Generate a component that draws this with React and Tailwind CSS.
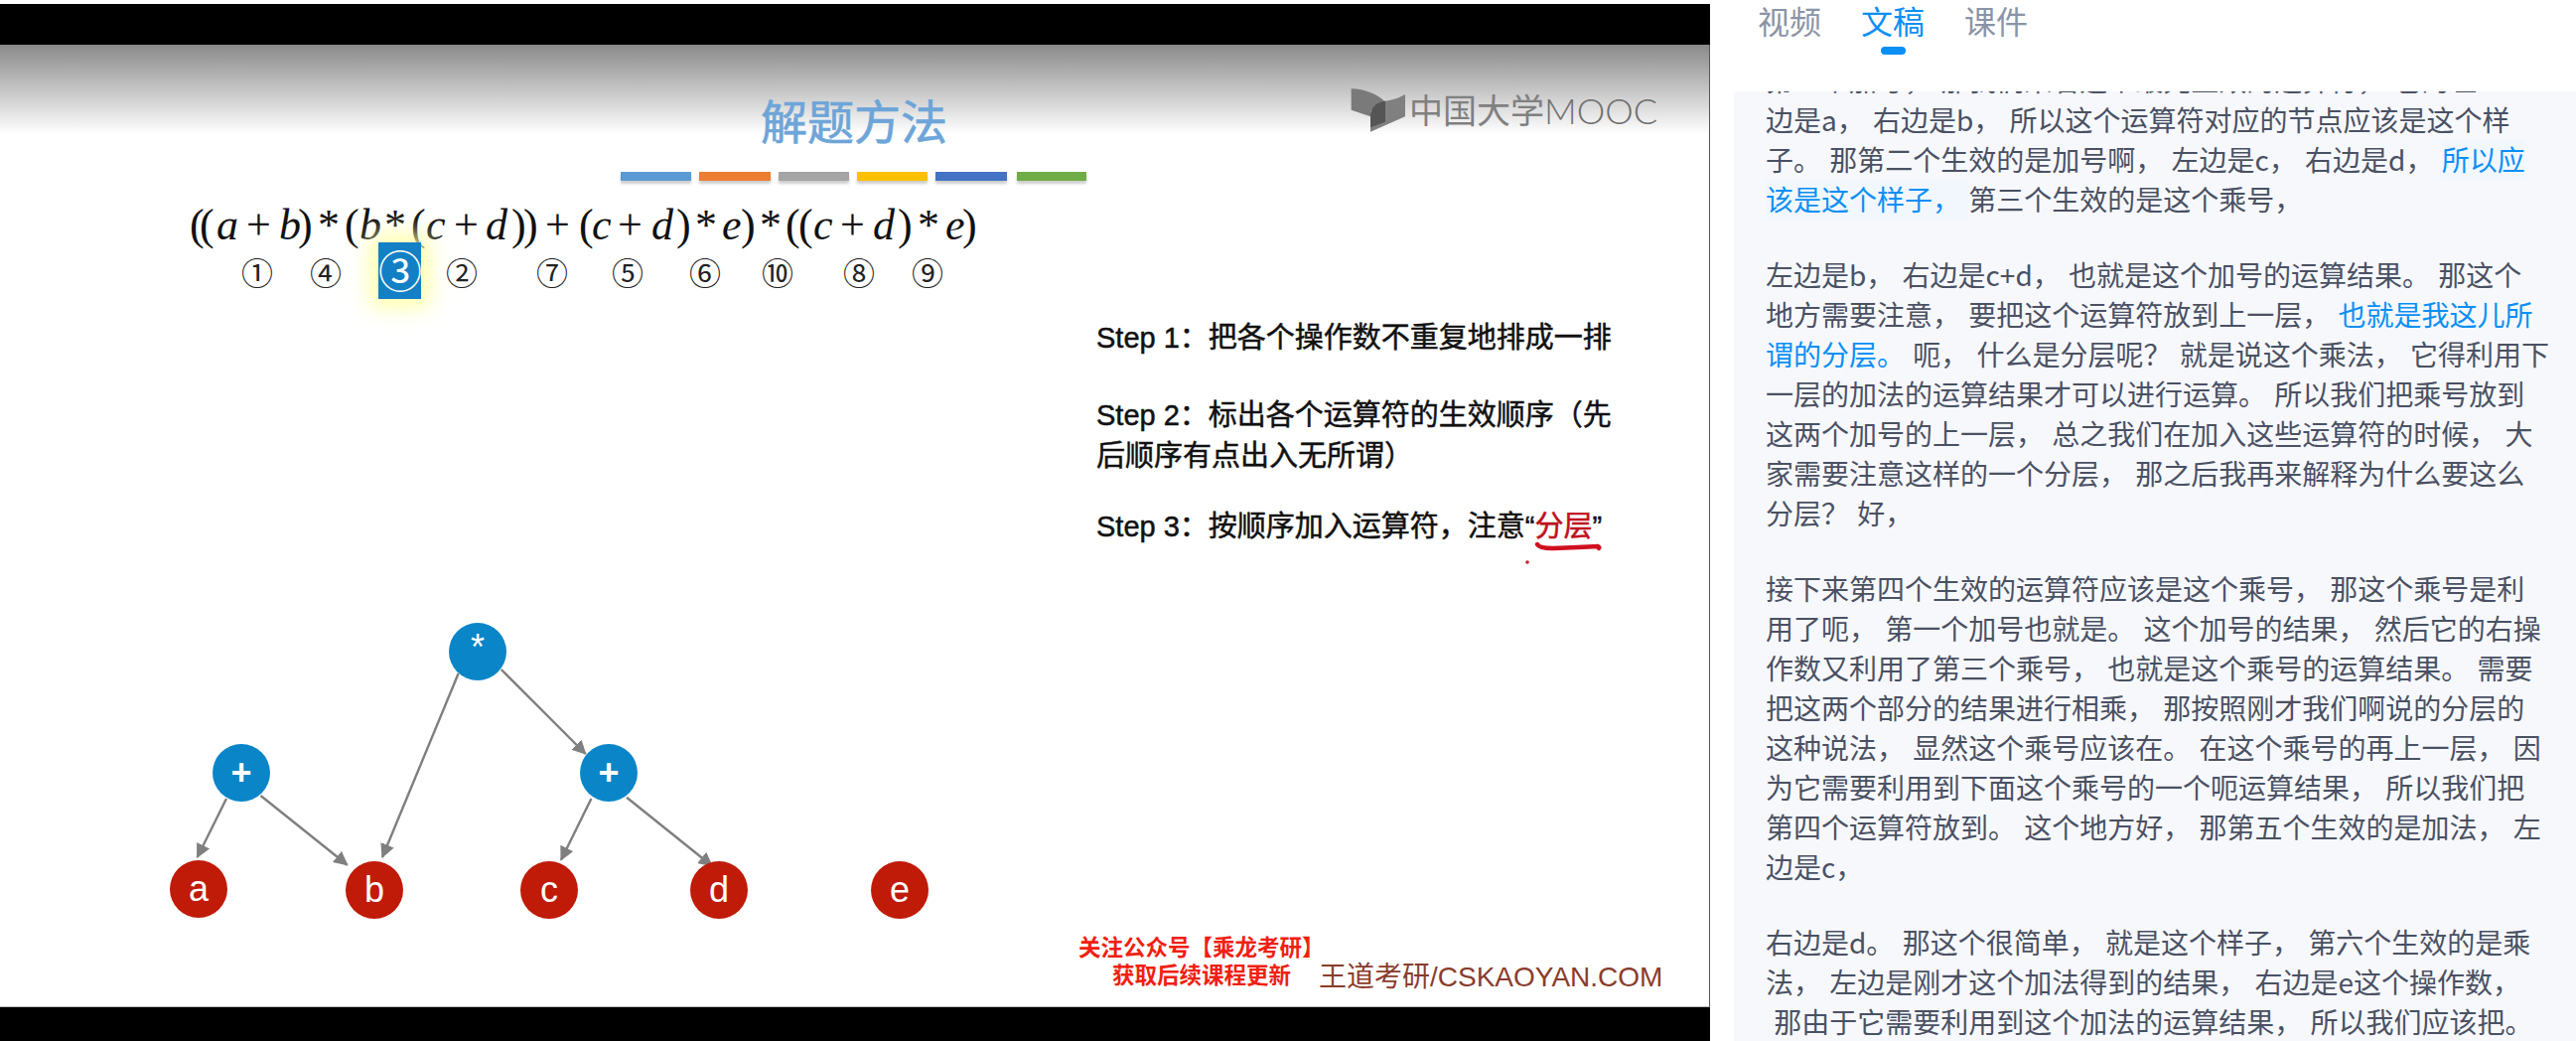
const cjk = "font-['Liberation_Sans','Noto_Sans_CJK_SC',sans-serif]";

const Mono = ({ children, className }) => (
    <span className={`inline-block ${className}`}>{children}</span>
);

const Formula = () => {
    const i = "italic";
    return (
        <div className="absolute left-[191px] top-[157px] flex font-['Liberation_Serif',serif] text-[44px] leading-[50px] text-[#111] whitespace-nowrap">
            <Mono className="w-[10px]">(</Mono>
            <Mono className="w-[17px]">(</Mono>
            <Mono className={`w-[30px] ${i}`}>a</Mono>
            <Mono className="w-[33px]">+</Mono>
            <Mono className={`w-[19px] ${i}`}>b</Mono>
            <Mono className="w-[20px]">)</Mono>
            <Mono className="w-[27px]">*</Mono>
            <Mono className="w-[15px]">(</Mono>
            <Mono className={`w-[25px] ${i}`}>b</Mono>
            <Mono className="w-[27px]">*</Mono>
            <Mono className="w-[15px]">(</Mono>
            <Mono className={`w-[28px] ${i}`}>c</Mono>
            <Mono className="w-[32px]">+</Mono>
            <Mono className={`w-[26px] ${i}`}>d</Mono>
            <Mono className="w-[12px]">)</Mono>
            <Mono className="w-[22px]">)</Mono>
            <Mono className="w-[34px]">+</Mono>
            <Mono className="w-[13px]">(</Mono>
            <Mono className={`w-[26px] ${i}`}>c</Mono>
            <Mono className="w-[34px]">+</Mono>
            <Mono className={`w-[25px] ${i}`}>d</Mono>
            <Mono className="w-[19px]">)</Mono>
            <Mono className="w-[27px]">*</Mono>
            <Mono className={`w-[19px] ${i}`}>e</Mono>
            <Mono className="w-[19px]">)</Mono>
            <Mono className="w-[26px]">*</Mono>
            <Mono className="w-[13px]">(</Mono>
            <Mono className="w-[15px]">(</Mono>
            <Mono className={`w-[27px] ${i}`}>c</Mono>
            <Mono className="w-[33px]">+</Mono>
            <Mono className={`w-[25px] ${i}`}>d</Mono>
            <Mono className="w-[20px]">)</Mono>
            <Mono className="w-[28px]">*</Mono>
            <Mono className={`w-[17px] ${i}`}>e</Mono>
            <Mono>)</Mono>
        </div>
    );
};

const Order = ({ n, className }) => (
    <span className={`absolute top-[208px] w-[40px] text-center font-['Noto_Sans_CJK_SC',sans-serif] text-[32px] leading-[40px] text-[#222] ${className}`}>
        {n}
    </span>
);

const Node = ({ label, className }) => (
    <div className={`absolute flex h-[58px] w-[58px] items-center justify-center rounded-full font-['Liberation_Sans',sans-serif] text-[36px] leading-none text-white ${className}`}>
        {label}
    </div>
);

const Tree = () => (
    <>
        <svg className="absolute left-0 top-0" width="1000" height="969" viewBox="0 45 1000 969">
            <defs>
                <marker id="arrow" markerWidth="6" markerHeight="6" refX="5.5" refY="3" orient="auto">
                    <path d="M0 0 L6 3 L0 6 Z" fill="#7f7f7f" />
                </marker>
            </defs>
            <g stroke="#7f7f7f" strokeWidth="2.4" fill="none">
                <line x1="461.6" y1="678" x2="385" y2="863" markerEnd="url(#arrow)" />
                <line x1="504.7" y1="674" x2="589.7" y2="759" markerEnd="url(#arrow)" />
                <line x1="228" y1="804" x2="198.7" y2="863" markerEnd="url(#arrow)" />
                <line x1="262.5" y1="801" x2="349.7" y2="870.7" markerEnd="url(#arrow)" />
                <line x1="595.4" y1="804" x2="565" y2="865.7" markerEnd="url(#arrow)" />
                <line x1="631" y1="802.7" x2="717" y2="871.7" markerEnd="url(#arrow)" />
            </g>
        </svg>
        <Node label="*" className="left-[452px] top-[582px] bg-[#0a85c8] pb-[8px] text-[24px]" />
        <Node label="+" className="left-[214px] top-[704px] bg-[#0a85c8] font-bold" />
        <Node label="+" className="left-[584px] top-[704px] bg-[#0a85c8] font-bold" />
        <Node label="a" className="left-[171px] top-[821px] bg-[#c01a08]" />
        <Node label="b" className="left-[348px] top-[822px] bg-[#c01a08]" />
        <Node label="c" className="left-[524px] top-[822px] bg-[#c01a08]" />
        <Node label="d" className="left-[695px] top-[822px] bg-[#c01a08]" />
        <Node label="e" className="left-[877px] top-[822px] bg-[#c01a08]" />
    </>
);

const Slide = () => (
    <div className="relative flex-1 overflow-hidden border-r border-b border-r-[#555] border-b-[#bbb] bg-[linear-gradient(#8a8a8a,#ffffff_90px)]">
        <div className={`absolute left-[766px] top-[51px] text-[47px] leading-[56px] text-[#6ea5d8] [-webkit-text-stroke:0.7px_#6ea5d8] ${cjk}`}>解题方法</div>
        <div className="absolute left-[625px] top-[128px] flex gap-[8px]">
            <div className="h-[9px] w-[71px] bg-[#5b9bd5] shadow-[0_3px_3px_rgba(0,0,0,0.2)]" />
            <div className="h-[9px] w-[72px] bg-[#ed7d31] shadow-[0_3px_3px_rgba(0,0,0,0.2)]" />
            <div className="h-[9px] w-[71px] bg-[#a5a5a5] shadow-[0_3px_3px_rgba(0,0,0,0.2)]" />
            <div className="h-[9px] w-[71px] bg-[#ffc000] shadow-[0_3px_3px_rgba(0,0,0,0.2)]" />
            <div className="h-[9px] w-[72px] bg-[#4472c4] shadow-[0_3px_3px_rgba(0,0,0,0.2)]" />
            <div className="ml-[2px] h-[9px] w-[70px] bg-[#70ad47] shadow-[0_3px_3px_rgba(0,0,0,0.2)]" />
        </div>

        <div className="absolute left-[1360px] top-[43px] flex items-start">
            <svg width="56" height="47" viewBox="30 24 168 141">
                <path d="M32 28 Q95 30 135 68 L90 95 L90 112 L32 92 Z" fill="#7a7a7a" />
                <path d="M195 45 L195 112 L90 158 L90 100 Q100 65 135 65 Q165 62 195 45 Z" fill="#808080" />
                <path d="M90 112 Q92 70 135 65 L135 128 L90 145 Z" fill="#555555" />
            </svg>
            <span className={`ml-[3px] mt-[2px] text-[34px] leading-[44px] text-[#808080] ${cjk}`}>中国大学</span>
            <span className="mt-[1px] font-['Lato',sans-serif] text-[36px] font-light leading-[44px] text-[#6f6f6f]">MOOC</span>
        </div>

        <Formula />

        <div className="absolute left-[381px] top-[199px] h-[57px] w-[43px] bg-[#1380c5] shadow-[0_0_22px_8px_#ffffa8]" />
        <Order n="①" className="left-[239px]" />
        <Order n="④" className="left-[308px]" />
        <span className="absolute left-[381px] top-[199px] w-[43px] text-center font-['Noto_Sans_CJK_SC',sans-serif] text-[44px] leading-[54px] text-white">③</span>
        <Order n="②" className="left-[445px]" />
        <Order n="⑦" className="left-[536px]" />
        <Order n="⑤" className="left-[612px]" />
        <Order n="⑥" className="left-[690px]" />
        <Order n="⑩" className="left-[763px]" />
        <Order n="⑧" className="left-[845px]" />
        <Order n="⑨" className="left-[914px]" />

        <div className={`absolute left-[1104px] top-[275px] w-[530px] text-[29px] leading-[41px] text-[#111] [-webkit-text-stroke:0.5px_#111] ${cjk}`}>
            <p>Step 1：把各个操作数不重复地排成一排</p>
            <p className="mt-[37px]">Step 2：标出各个运算符的生效顺序（先</p>
            <p>后顺序有点出入无所谓）</p>
            <p className="mt-[30px] whitespace-nowrap">Step 3：按顺序加入运算符，注意“<span className="text-[#c01020] [-webkit-text-stroke:0.5px_#c01020]">分层</span>”</p>
        </div>
        <svg className="absolute left-[1530px] top-[498px]" width="90" height="30" viewBox="0 0 90 30">
            <path d="M18 5 Q20 9 34 9 Q60 8 79 7 Q81 8 80 9" stroke="#d01020" strokeWidth="4.5" fill="none" strokeLinecap="round" />
            <circle cx="8" cy="23" r="1.8" fill="#d01020" />
        </svg>

        <Tree />

        <div className={`absolute left-[1086px] top-[896px] text-[22.5px] font-bold leading-[28px] text-[#f02010] whitespace-nowrap ${cjk}`}>
            <p>关注公众号【乘龙考研】</p>
            <p className="ml-[34px]">获取后续课程更新</p>
        </div>
        <div className={`absolute left-[1328px] top-[921px] text-[28px] leading-[36px] text-[#8a3c2c] whitespace-nowrap ${cjk}`}>王道考研/CSKAOYAN.COM</div>
    </div>
);

const blue = "text-[#0a8ff5]";

const paragraphs = [
    [
        "第一个加号， 那我们来看这个最先生效的运算符， 它的左",
        "边是a， 右边是b， 所以这个运算符对应的节点应该是这个样",
        <>子。 那第二个生效的是加号啊， 左边是c， 右边是d， <span className={`${blue} bg-[#f2f7fe]`}>所以应</span></>,
        <><span className={`${blue} bg-[#f2f7fe]`}>该是这个样子， </span>第三个生效的是这个乘号，</>,
    ],
    [
        "左边是b， 右边是c+d， 也就是这个加号的运算结果。 那这个",
        <>地方需要注意， 要把这个运算符放到上一层， <span className={blue}>也就是我这儿所</span></>,
        <><span className={blue}>谓的分层。</span> 呃， 什么是分层呢？ 就是说这个乘法， 它得利用下</>,
        "一层的加法的运算结果才可以进行运算。 所以我们把乘号放到",
        "这两个加号的上一层， 总之我们在加入这些运算符的时候， 大",
        "家需要注意这样的一个分层， 那之后我再来解释为什么要这么",
        "分层？ 好，",
    ],
    [
        "接下来第四个生效的运算符应该是这个乘号， 那这个乘号是利",
        "用了呃， 第一个加号也就是。 这个加号的结果， 然后它的右操",
        "作数又利用了第三个乘号， 也就是这个乘号的运算结果。 需要",
        "把这两个部分的结果进行相乘， 那按照刚才我们啊说的分层的",
        "这种说法， 显然这个乘号应该在。 在这个乘号的再上一层， 因",
        "为它需要利用到下面这个乘号的一个呃运算结果， 所以我们把",
        "第四个运算符放到。 这个地方好， 那第五个生效的是加法， 左",
        "边是c，",
    ],
    [
        "右边是d。 那这个很简单， 就是这个样子， 第六个生效的是乘",
        "法， 左边是刚才这个加法得到的结果， 右边是e这个操作数，",
        " 那由于它需要利用到这个加法的运算结果， 所以我们应该把。",
    ],
];

const Transcript = () => (
    <div className="ml-[24px] flex-1 overflow-hidden bg-[#f7f8fc] pl-[32px]">
        <div className="-mt-[32px] font-['Noto_Sans_CJK_SC',sans-serif] text-[28px] leading-[40px] text-[#4a5163] [word-spacing:2px]">
            {paragraphs.map((lines, p) => (
                <div key={p} className="mb-[36px]">
                    {lines.map((line, l) => (
                        <div key={l} className="whitespace-pre">{line}</div>
                    ))}
                </div>
            ))}
        </div>
    </div>
);

const App = () => {
    return (
        <div className="flex h-[1048px] w-[2594px] overflow-hidden bg-white">
            <div className="flex w-[1722px] shrink-0 flex-col pt-[4px]">
                <div className="h-[41px] bg-black" />
                <Slide />
                <div className="h-[34px] bg-black" />
            </div>
            <div className="flex min-w-0 flex-1 flex-col">
                <div className="h-[92px] pl-[48px] font-['Noto_Sans_CJK_SC',sans-serif] text-[32px] leading-[40px]">
                    <div className="flex gap-[40px]">
                        <span className="text-[#8a94a6]">视频</span>
                        <span className="flex flex-col items-center text-[#0a8ff5]">
                            文稿
                            <span className="mt-[7px] h-[8px] w-[25px] rounded-full bg-[#0a8ff5]" />
                        </span>
                        <span className="text-[#8a94a6]">课件</span>
                    </div>
                </div>
                <Transcript />
            </div>
        </div>
    );
};

export default App;
